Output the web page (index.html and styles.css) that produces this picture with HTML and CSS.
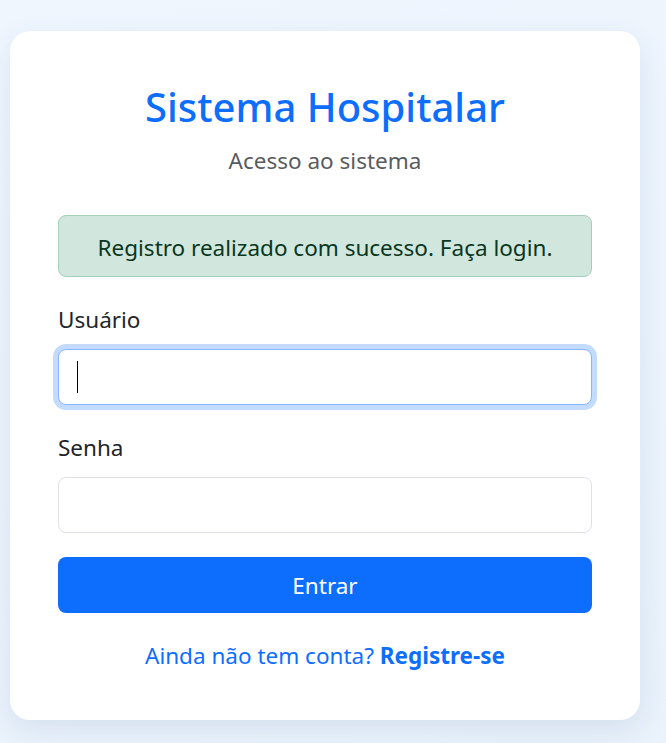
FILE: index.html
```html
<!DOCTYPE html>
<html lang="pt-BR">
<head>
<meta charset="utf-8">
<title>Sistema Hospitalar</title>
<link rel="stylesheet" href="styles.css">
</head>
<body>
<main class="page">
  <section class="card">
    <h1 class="title">Sistema Hospitalar</h1>
    <p class="subtitle">Acesso ao sistema</p>
    <div class="alert">Registro realizado com sucesso. Faça login.</div>
    <form class="form">
      <div class="field">
        <label class="label" for="usuario">Usuário</label>
        <div class="input focus" id="usuario"><span class="caret"></span></div>
      </div>
      <div class="field">
        <label class="label" for="senha">Senha</label>
        <div class="input" id="senha"></div>
      </div>
      <button type="button" class="btn">Entrar</button>
    </form>
    <p class="footer">Ainda não tem conta? <a href="#" class="link">Registre-se</a></p>
  </section>
</main>
</body>
</html>
```
FILE: styles.css
```css
* { box-sizing: border-box; }
html, body { margin: 0; padding: 0; }
body {
  font-family: "Noto Sans", "Open Sans", sans-serif;
  font-size: 22.5px;
  line-height: 1.5;
  color: #212529;
  background: linear-gradient(160deg, #eff6fe 0%, #eaf2fb 100%);
  min-height: 743px;
}
.page {
  padding: 31px 26px 23px 10px;
}
.card {
  width: 630px;
  background: #fff;
  border-radius: 20px;
  box-shadow: 0 10px 30px rgba(40, 80, 140, 0.11);
  padding: 52px 48px 47px;
  text-align: center;
}
.title {
  margin: 0;
  font-size: 40px;
  line-height: 48px;
  font-weight: 500;
  color: #0d6efd;
}
.subtitle {
  margin: 13.4px 0 0;
  color: #595c5f;
  line-height: 33.75px;
}
.alert {
  margin-top: 36.8px;
  height: 62px;
  padding: 15px 16px 0;
  background: #d1e7dd;
  border: 1px solid #a3cfbb;
  border-radius: 8px;
  color: #0a3622;
  line-height: 33.75px;
}
.form {
  text-align: left;
  margin-top: 26.4px;
}
.field { margin-bottom: 26px; }
.field:last-of-type { margin-bottom: 24px; }
.label {
  display: block;
  line-height: 33.75px;
  margin-bottom: 12px;
}
.input {
  height: 56px;
  border: 1px solid #dee2e6;
  border-radius: 8px;
  background: #fff;
  padding: 12px 18px;
  display: flex;
  align-items: center;
}
.input.focus {
  border-color: #86b7fe;
  box-shadow: 0 0 0 5px rgba(13, 110, 253, 0.25);
}
.caret {
  width: 1px;
  height: 32px;
  background: #000;
}
.btn {
  display: block;
  width: 100%;
  height: 56px;
  border: 0;
  border-radius: 8px;
  background: #0d6efd;
  color: #fff;
  font: inherit;
  line-height: 33.75px;
  padding: 2px 0 0;
}
.footer {
  margin: 26.4px 0 0;
  color: #0d6efd;
  line-height: 33.75px;
}
.link {
  color: #0d6efd;
  font-weight: 700;
  text-decoration: none;
}
```
